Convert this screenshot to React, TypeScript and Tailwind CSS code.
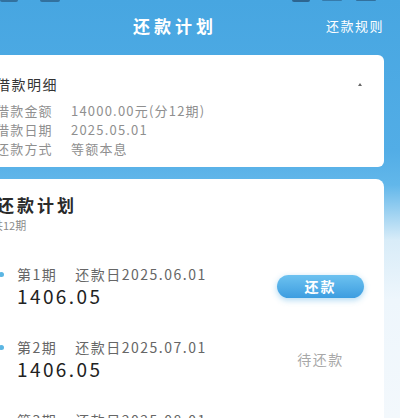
import React from "react";

const font = { fontFamily: '"Noto Sans CJK SC", "Noto Sans", sans-serif' };

function Item({ n, date, action }: { n: number; date: string; action: "pay" | "wait" }) {
  return (
    <div className="flex items-center pr-[20px]">
      <div className="w-[20px] flex items-start self-stretch pt-[8px]">
        <div className="ml-[2px] w-[5px] h-[5px] rounded-full bg-[#5bb6e3]" />
      </div>
      <div className="flex flex-col">
        <div className="text-[14px] leading-[20px] text-[#666] tracking-[1.5px] whitespace-nowrap">
          第{n}期<span className="ml-[18px]">还款日{date}</span>
        </div>
        <div className="text-[19px] leading-[24px] text-[#222] tracking-[2.4px] font-normal">1406.05</div>
      </div>
      <div className="ml-auto w-[87px] flex justify-center">
        {action === "pay" ? (
          <div className="w-[87px] h-[23px] rounded-full bg-gradient-to-b from-[#6cc2f0] to-[#3c9de0] text-white text-[14px] leading-[23px] text-center tracking-[2px] font-bold shadow-[0_2px_6px_rgba(74,168,226,0.45)]">
            还款
          </div>
        ) : (
          <div className="text-[14px] text-[#a8a8a8] tracking-[1.5px]">待还款</div>
        )}
      </div>
    </div>
  );
}

export default function App() {
  return (
    <div
      className="w-[400px] h-[418px] overflow-hidden bg-[linear-gradient(to_bottom,#47a6e1_0px,#52ade6_150px,#62b7ea_185px,#d8ecf8_240px,#eef6fc_300px,#f3f8fc_418px)]"
      style={font}
    >
      <div className="h-[3px] flex items-start">
        <div className="ml-[0px] w-[18px] h-[2px] rounded-b bg-[#1d3b5c]/50" />
        <div className="ml-[22px] w-[20px] h-[2px] rounded-b bg-[#1d3b5c]/50" />
        <div className="ml-[232px] w-[18px] h-[2px] rounded-b bg-[#1d3b5c]/60" />
        <div className="ml-[12px] w-[20px] h-[1px] rounded-b bg-[#1d3b5c]/40" />
        <div className="ml-[14px] w-[20px] h-[1px] rounded-b bg-[#1d3b5c]/50" />
      </div>
      <div className="h-[45px] flex items-center">
        <div className="pl-[133px] text-[17px] text-white font-bold tracking-[4px]">还款计划</div>
        <div className="ml-auto pr-[16px] text-[13px] text-white tracking-[1.5px]">还款规则</div>
      </div>

      <div className="mt-[7px] ml-[-16px] w-[400px] h-[112px] rounded-[6px] bg-white pl-[12px] pr-[22px] pt-[19px]">
        <div className="flex items-center h-[20px]">
          <div className="text-[14px] text-[#333] tracking-[1.5px]">借款明细</div>
          <div className="ml-auto w-0 h-0 border-l-[2.5px] border-r-[2.5px] border-b-[3px] border-l-transparent border-r-transparent border-b-[#666]" />
        </div>
        <div className="mt-[7px] flex flex-col text-[13px] leading-[19px] text-[#8f8f8f] tracking-[1.2px]">
          <div className="flex"><span className="w-[75px]">借款金额</span><span>14000.00元(分12期)</span></div>
          <div className="flex"><span className="w-[75px]">借款日期</span><span>2025.05.01</span></div>
          <div className="flex"><span className="w-[75px]">还款方式</span><span>等额本息</span></div>
        </div>
      </div>

      <div className="mt-[12px] ml-[-16px] w-[400px] h-[300px] rounded-t-[8px] bg-white pl-[13px] pt-[14px]">
        <div className="text-[17px] leading-[24px] text-[#2a2a2a] font-bold tracking-[3px]">还款计划</div>
        <div className="ml-[-5px] text-[11px] leading-[16px] text-[#8a8a8a]">共12期</div>
        <div className="mt-[31px] flex flex-col gap-[29px]">
          <Item n={1} date="2025.06.01" action="pay" />
          <Item n={2} date="2025.07.01" action="wait" />
          <Item n={3} date="2025.08.01" action="wait" />
        </div>
      </div>
    </div>
  );
}
